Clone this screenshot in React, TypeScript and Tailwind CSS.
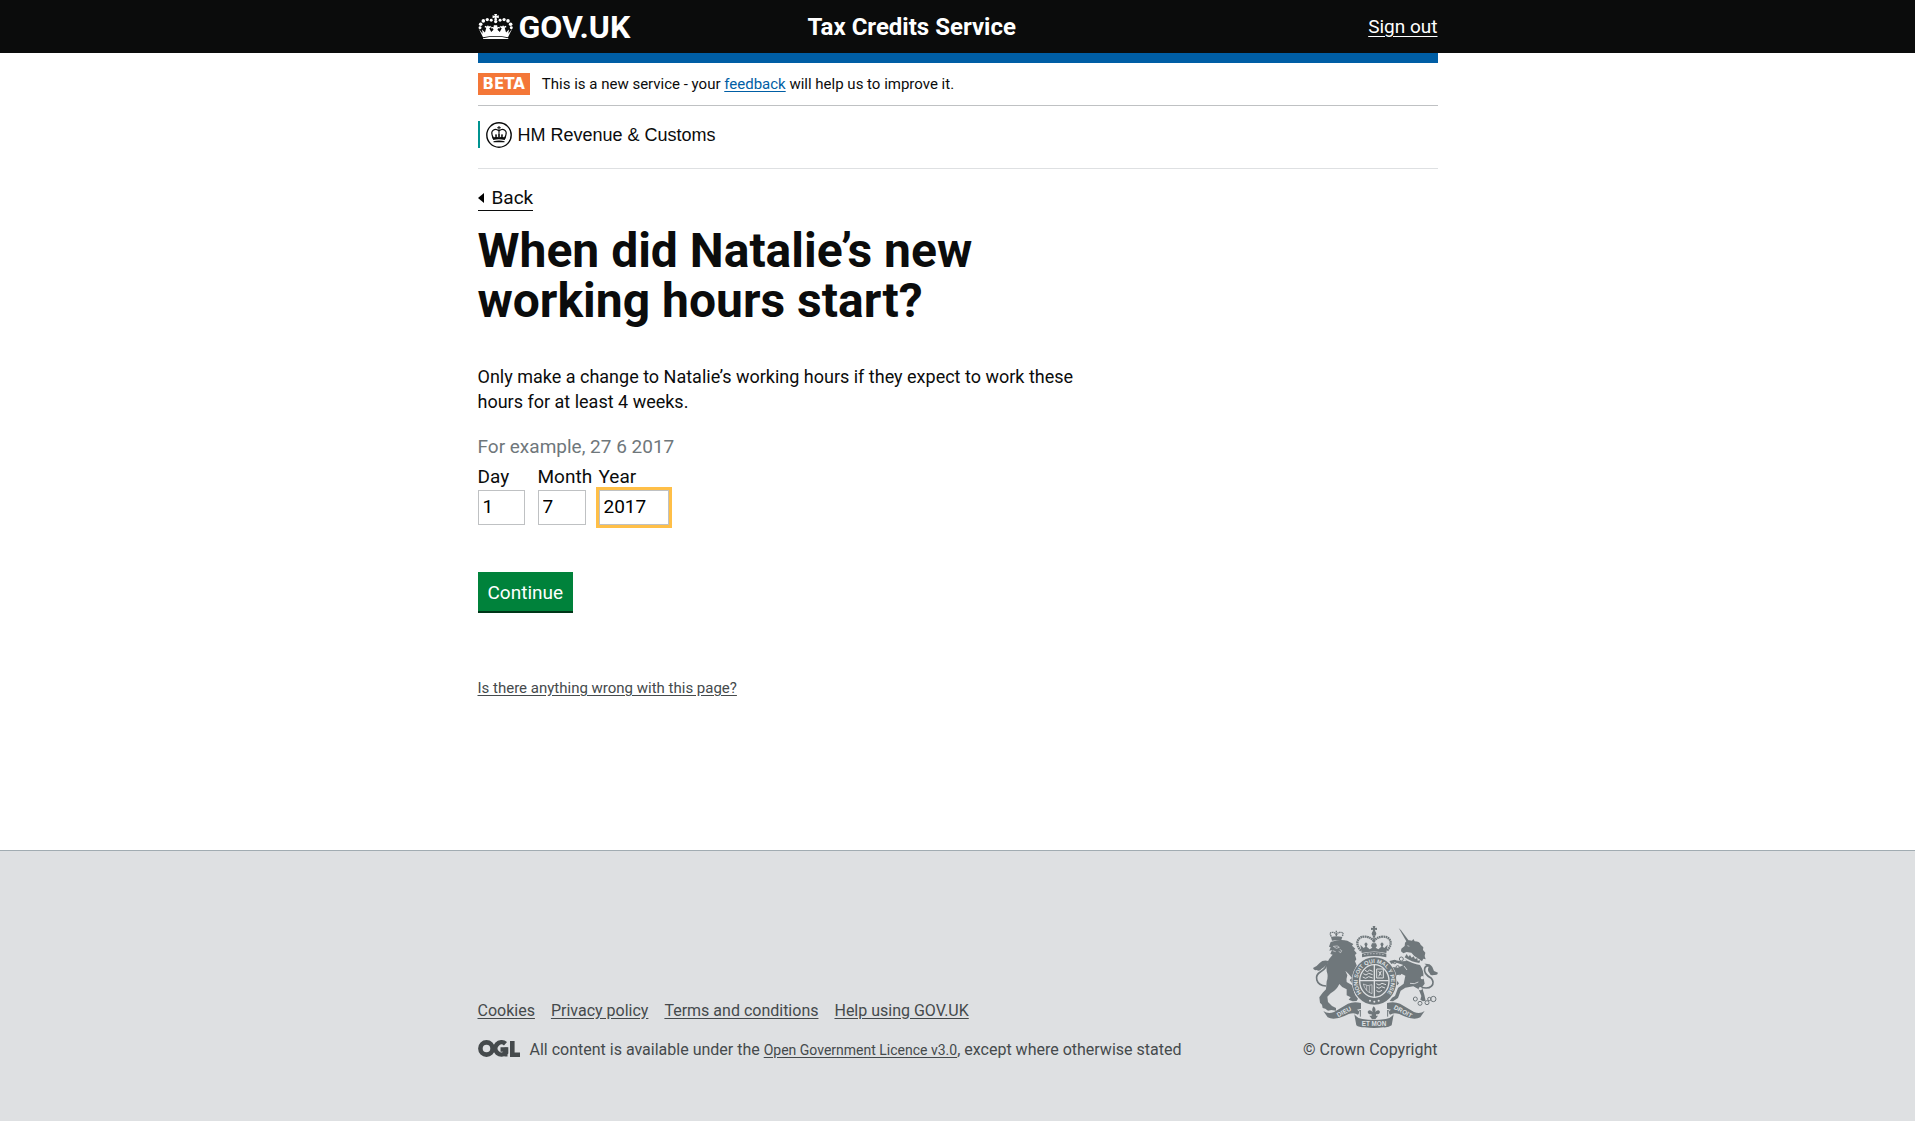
import type { ReactNode } from "react";

function HeaderCrown() {
  return (
    <svg viewBox="0 0 106 76" className="h-[25px] w-[35px]" fill="#fff" aria-hidden="true">
      <path d="M49 0h9l-2 6 7-2v9l-7-2 2 8h-9l2-8-7 2V4l7 2z" />
      <circle cx="53.500" cy="23" r="5" />
      <circle cx="40" cy="19" r="4.500" />
      <circle cx="28" cy="17" r="5" />
      <circle cx="16" cy="21" r="5.500" />
      <circle cx="8" cy="31" r="5.500" />
      <circle cx="6" cy="42" r="4.500" />
      <circle cx="67" cy="19" r="4.500" />
      <circle cx="79" cy="17" r="5" />
      <circle cx="91" cy="21" r="5.500" />
      <circle cx="99" cy="31" r="5.500" />
      <circle cx="101" cy="42" r="4.500" />
      <path d="M2 44l12 16-2-13 9 9 4-14-5-2 1-4 6 2 3-4 3 4 5-2 1 4-5 3 6 12 7-7-2-5-5 1v-5l7 1 1-6h10l1 6 7-1v5l-5-1-2 5 7 7 6-12-5-3 1-4 5 2 3-4 3 4 6-2 1 4-5 2 4 14 9-9-2 13 12-16-13 27Q54 63 15 71z" />
      <path d="M15 74Q54 65 92 74v2H15z" />
    </svg>
  );
}

function HmrcRoundel() {
  return (
    <svg viewBox="0 0 26 26" className="size-[26px]" fill="#0b0c0c" aria-hidden="true">
      <circle cx="13" cy="13" r="12.200" fill="#fff" stroke="#0b0c0c" strokeWidth="1.400" />
      <path d="M12.500 4h1v1.200h1.300v1H13.500V8h-1V6.200h-1.300v-1h1.300z" />
      <path d="M13 9C9 5.500 4.800 8.500 6 12.500l1 4M13 9c4-3.500 8.200-.5 7 3.500l-1 4M13 8v4" fill="none" stroke="#0b0c0c" strokeWidth="1.100" />
      <path d="M6 12.500l2 3 1.500-1-.5-2h2l-.4 2 1.600 1V12h1.600v3.500l1.600-1-.4-2h2l-.5 2 1.500 1 2-3-1.200 5.500q-6-1.500-11.600 0z" />
      <path d="M7.500 19.200q5.500-1.500 11 0v1h-11z" />
    </svg>
  );
}

function OglLogo() {
  return (
    <svg viewBox="0 0 42 17" className="h-[17px] w-[42px] shrink-0" fill="none" stroke="#454a4c" strokeWidth="4.600" role="img" aria-label="OGL">
      <circle cx="8.500" cy="8.500" r="6.100" />
      <path d="M27.500 3.800A6.100 6.100 0 1 0 28 12.500V9.500H22.500" />
      <path d="M28 7.500v9" strokeWidth="3" />
      <path d="M34.300 1v13.700H42" />
    </svg>
  );
}

function RoyalArms() {
  return (
    <svg viewBox="69 78 375 306" className="h-[102px] w-[125px]" fill="#6f777b" aria-hidden="true">
      {/* crown above the shield */}
      <path d="M248 78h8l-1 6 6-1v7l-6-1 1 8h-8l1-8-6 1v-7l6 1z" />
      <circle cx="252" cy="101" r="7" />
      <g fill="none" stroke="#6f777b">
        <path d="M213 152C192 130 204 108 226 110Q245 112 251 124Q258 112 278 110C300 108 312 130 291 152" strokeWidth="7" strokeDasharray="5 1.500" />
        <path d="M252 108v22" strokeWidth="7" strokeDasharray="5 1.500" />
      </g>
      <path d="M211 134l10 10 5-4-3-8 5-5 5 5-3 8 9 8 8-5-4-5 3-8h12l3 8-4 5 8 5 9-8-3-8 5-5 5 5-3 8 5 4 10-10-4 25q-36-9-74 0z" />
      <path d="M216 161q36-10 73 0v11q-36-8-73 0z" />
      <path d="M222 164q30-6 61 0" fill="none" stroke="#dee0e2" strokeWidth="2" strokeDasharray="5 4" />

      {/* lion */}
      <path d="M126 122l-3-11q16-5 34 0l-4 12q-14-4-27-1z" />
      <path d="M124 110Q116 96 128 97 138 97 139 108 141 97 151 97 164 96 156 110M139 92v16" fill="none" stroke="#6f777b" strokeWidth="4" strokeDasharray="4 1.500" />
      <path d="M122 126Q150 116 172 122L180 127 190 132 186 137 196 146 192 150 200 160 195 165 199 178 195 184 200 196Q204 206 201 216Q206 226 205 240L200 252 192 244 186 250 179 240 186 234 176 222 166 212 172 226Q168 238 170 246L184 254Q196 262 192 276L196 286 204 296 200 303 188 304 176 299 182 292 170 286 170 268Q156 264 148 252Q140 270 122 280L112 290 114 306 126 318 138 324 138 332 124 330 114 332 106 326 98 324 96 314 90 308 88 292 98 278 108 268 110 244Q116 230 110 214Q108 190 118 176L128 164 121 162 126 150 118 152 122 142 117 140z" />
      <path d="M130 139l12-1 6 4-9 3zM149 148l6 4-3 6-6-4M128 152l9 3" fill="none" stroke="#dee0e2" strokeWidth="2" />
      <path d="M108 258C76 256 72 226 92 215Q112 205 111 184" fill="none" stroke="#6f777b" strokeWidth="5" />
      <path d="M115 183q-16-4-26 6-8 10-20 15 2 8 11 6 8 6 15-4 15-8 20-23z" />

      {/* unicorn */}
      <path d="M326 84l7 7 26 34-7 4-22-38z" />
      <path d="M345 128Q352 118 366 122L370 117 374 124Q388 124 392 134L400 142 399 150 406 158 404 168 407 178 400 176 396 184 388 178Q372 170 364 158L350 156 340 160 333 154 334 146 344 138z" />
      <path d="M352 137l6 2" stroke="#dee0e2" strokeWidth="2" />
      <path d="M350 162l5 8 5-5 5 8 6-4 4 8 7-3 1 8 8-1-3 8q-22-2-44-17z" />
      <path d="M342 177q27 15 48 18 12 18 10 35l4 21-8 11 7 22 4 18-8 2-8-5 3-11-8-20-16-9-24 4-14 9-8 22-15 10-10-1 7-10 9-5 9-24 17-13 5-24-12-6-14 5-3 12 10 12-5 6-11-8-3-17-9-11-5-13 9-7 21 3 16-8-25-8-11 5-6-9 13-3 24 4 15-1z" />
      <path d="M360 250q13 4 25-4M342 198l9 12" fill="none" stroke="#dee0e2" strokeWidth="2.500" />
      <path d="M392 261C423 271 437 252 424 235Q400 221 404 205Q408 195 419 197" fill="none" stroke="#6f777b" strokeWidth="5" />
      <path d="M403 191q19-1 24 10l5 12 12 5q-1 9-13 7-9 4-13-7-7-8-2-18z" />
      <g fill="none" stroke="#6f777b" strokeWidth="3">
        <circle cx="334" cy="177" r="6" />
        <circle cx="314" cy="186" r="5" />
        <circle cx="323" cy="202" r="5" />
        <circle cx="329" cy="219" r="5" />
        <circle cx="376" cy="297" r="6" />
        <circle cx="390" cy="310" r="6" />
        <circle cx="411" cy="308" r="6" />
        <circle cx="418" cy="297" r="5" />
        <circle cx="430" cy="297" r="8" />
      </g>
      <circle cx="397" cy="233" r="5" fill="#dee0e2" />
      <circle cx="391" cy="266" r="5" fill="#dee0e2" />

      {/* garter and quartered shield */}
      <ellipse cx="253" cy="243" rx="68" ry="73" fill="#dee0e2" />
      <ellipse cx="253" cy="243" rx="56" ry="61" fill="none" stroke="#6f777b" strokeWidth="20" />
      <path id="garter" d="M223 288A50 55 0 1 1 283 288" fill="none" />
      <text fill="#dee0e2" className="font-['Liberation_Sans'] text-[17px] font-bold">
        <textPath href="#garter" startOffset="50%" textAnchor="middle">HONI SOIT QUI MAL Y PENSE</textPath>
      </text>
      <ellipse cx="253" cy="243" rx="42" ry="47" />
      <path d="M253 195v96M210 242h86" stroke="#dee0e2" strokeWidth="4" />
      <g fill="none" stroke="#dee0e2" strokeWidth="3">
        <path d="M225 211l7 4 7-5 9 4M220 221l8 4 8-5 12 4M218 231l9 4 9-5 12 4" />
        <path d="M259 251l8 4 9-5 12 4M259 261l8 4 8-5 10 4M259 272l8 4 9-5" />
        <path d="M260 207h20v27h-20zM266 229l8-16M266 214l8 12" />
        <path d="M220 252q5 22 26 29V254q-11 7-26-2zM230 256v16M238 258v20" strokeWidth="2" />
      </g>
      <g fill="#dee0e2">
        <circle cx="240" cy="302" r="3" />
        <circle cx="253" cy="305" r="3" />
        <circle cx="266" cy="302" r="3" />
      </g>

      {/* fleur-de-lis */}
      <path d="M251 319q9 8 4 17 10-10 15-1-1 9-12 8v4h6l-8 11h-10l-8-11h7v-4q-11 1-12-8 6-9 15 1-4-9 3-17z" />

      {/* motto scroll */}
      <path d="M100 333q14 10 32 3l42-25q18-8 39-2v17l-12 3q11 5 3 15-11-8-28-2-42 22-63 10z" />
      <path d="M404 333q-14 10-32 3l-42-25q-18-8-39-2v17l12 3q-11 5-3 15 11-8 28-2 42 22 63 10z" />
      <path d="M193 343q11 14 24 14 35 6 70 0 13 0 24-14l-6 33q-9 7-25 6-28 4-56 0-18 0-25-6z" />
      <path d="M199 342l12-12v20M305 342l-12-12v20" fill="none" stroke="#6f777b" strokeWidth="3" />
      <g fill="#dee0e2" textAnchor="middle" className="font-['Liberation_Sans'] text-[19px] font-bold">
        <text transform="translate(165 341) rotate(-28)">DIEU</text>
        <text transform="translate(336 340) rotate(28)">DROIT</text>
        <text x="252" y="378">ET MON</text>
      </g>
    </svg>
  );
}

function DateField({ id, label, value, width, active }: { id: string; label: string; value: string; width: string; active?: boolean }) {
  return (
    <div className={`flex flex-col ${width}`}>
      <label htmlFor={id} className="whitespace-nowrap leading-[25px]">{label}</label>
      <input
        id={id}
        type="text"
        inputMode="numeric"
        defaultValue={value}
        className={`mt-px h-[35px] w-full border border-[#bfc1c3] bg-white px-1 pb-0.5 text-black outline-[#ffbf47] focus:outline-3 ${active ? "outline-3" : "outline-none"}`}
      />
    </div>
  );
}

function FooterLink({ children }: { children: ReactNode }) {
  return <a href="#" className="underline underline-offset-2">{children}</a>;
}

export default function App() {
  return (
    <div className="flex min-h-screen flex-col bg-white font-['Roboto',sans-serif] text-[19px] leading-[25px] text-[#0b0c0c]">
      <header className="bg-[#0b0c0c] text-white">
        <div className="mx-auto grid h-[53px] max-w-[960px] grid-cols-[330px_1fr_auto] items-center">
          <a href="#" className="flex items-center gap-1.5 text-[32px] leading-none font-bold">
            <HeaderCrown />
            <span>GOV.UK</span>
          </a>
          <a href="#" className="text-2xl font-bold">Tax Credits Service</a>
          <a href="#" className="underline underline-offset-3">Sign out</a>
        </div>
      </header>

      <div className="mx-auto w-full max-w-[960px]">
        <div className="h-2.5 bg-[#005ea5]" />
        <div className="flex items-center gap-3 border-b border-[#bfc1c3] py-2.5 text-[15px] leading-[22px]">
          <strong className="bg-[#f47738] px-[5px] font-['DejaVu_Sans'] font-bold text-white">BETA</strong>
          <p>
            This is a new service - your{" "}
            <a href="#" className="text-[#005ea5] underline underline-offset-2">feedback</a> will help us to improve it.
          </p>
        </div>
        <div className="flex border-b border-[#dee0e2] pt-[15px] pb-5">
          <div className="flex items-center gap-1.5 border-l-2 border-[#009390] pl-1.5 font-['Liberation_Sans'] text-lg leading-[25px]">
            <HmrcRoundel />
            <span className="pt-0.5">HM Revenue &amp; Customs</span>
          </div>
        </div>

        <main className="pt-[15px] pb-[152px]">
          <a href="#" className="inline-flex items-center gap-2 border-b border-[#0b0c0c] leading-6">
            <svg viewBox="0 0 6 10" className="h-2.5 w-1.5" aria-hidden="true"><path d="M6 0v10L0 5z" /></svg>
            Back
          </a>
          <div className="max-w-[630px]">
            <h1 className="mt-[15px] text-5xl leading-[50px] font-bold">
              When did Natalie’s new
              <br />
              working hours start?
            </h1>
            <p className="mt-[38px] text-lg leading-[25px]">
              Only make a change to Natalie’s working hours if they expect to work these hours for at least 4 weeks.
            </p>
            <form onSubmit={(e) => e.preventDefault()}>
              <fieldset className="mt-5">
                <p className="text-[#6f777b]">For example, 27 6 2017</p>
                <div className="mt-[5px] flex">
                  <DateField id="day" label="Day" value="1" width="mr-[13px] w-[47px]" />
                  <DateField id="month" label="Month" value="7" width="mr-[13px] w-12" />
                  <DateField id="year" label="Year" value="2017" width="w-[70px]" active />
                </div>
              </fieldset>
              <button type="submit" className="mt-[47px] bg-[#00823b] px-2.5 pt-2 pb-1.5 leading-[25px] text-white shadow-[0_2px_0_#003618]">
                Continue
              </button>
            </form>
          </div>
          <a href="#" className="mt-[67px] block w-fit text-[15px] leading-5 text-[#454a4c] underline underline-offset-2">
            Is there anything wrong with this page?
          </a>
        </main>
      </div>

      <footer className="grow border-t border-[#a1acb2] bg-[#dee0e2] pt-[75px] pb-[52px] text-[#454a4c]">
        <div className="mx-auto flex max-w-[960px] items-end justify-between">
          <div className="text-base leading-5">
            <nav className="flex gap-4">
              <FooterLink>Cookies</FooterLink>
              <FooterLink>Privacy policy</FooterLink>
              <FooterLink>Terms and conditions</FooterLink>
              <FooterLink>Help using GOV.UK</FooterLink>
            </nav>
            <div className="mt-[19px] flex items-start gap-2.5">
              <OglLogo />
              <p>
                All content is available under the{" "}
                <a href="#" className="text-sm underline underline-offset-2">Open Government Licence v3.0</a>, except where otherwise stated
              </p>
            </div>
          </div>
          <a href="#" className="flex flex-col items-end gap-3 text-base leading-5">
            <RoyalArms />
            © Crown Copyright
          </a>
        </div>
      </footer>
    </div>
  );
}
